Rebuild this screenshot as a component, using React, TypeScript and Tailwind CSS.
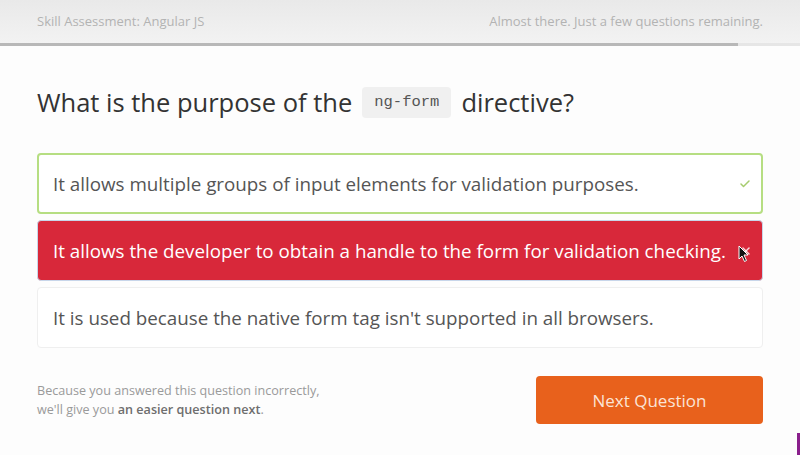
import { Check, X } from "lucide-react"

const options = [
  { text: "It allows multiple groups of input elements for validation purposes.", state: "correct" },
  { text: "It allows the developer to obtain a handle to the form for validation checking.", state: "wrong" },
  { text: "It is used because the native form tag isn't supported in all browsers.", state: "idle" },
]

export default function App() {
  return (
    <div className="relative h-[455px] w-[800px] overflow-hidden bg-[#fdfdfd] font-['Open_Sans',sans-serif]">
      <header className="h-[46px] bg-gradient-to-b from-[#e9e9e9] to-[#f3f3f3]">
        <div className="flex h-[43px] items-center justify-between px-[37px] text-[13px] text-[#b3b3b3]">
          <span>Skill Assessment: Angular JS</span>
          <span>Almost there. Just a few questions remaining.</span>
        </div>
        <div className="flex h-[3px] bg-[#e6e6e6]">
          <div className="w-[738px] bg-[#b8b8b8]" />
        </div>
      </header>

      <main className="px-[37px]">
        <h1 className="mt-[37px] flex items-center text-[25.5px] text-[#333]">
          What is the purpose of the
          <code className="mx-[10px] rounded-sm bg-[#f0f0f0] px-[12px] py-[4px] font-['Liberation_Mono',monospace] text-[15.5px] text-[#555]">
            ng-form
          </code>
          directive?
        </h1>

        <div className="mt-[32px] flex flex-col gap-[6px]">
          {options.map((o) => (
            <div
              key={o.text}
              className={
                o.state === "correct"
                  ? "flex h-[61px] items-center justify-between rounded border-2 border-[#b6de82] bg-white pl-[14px] pr-[10px] text-[18.8px] text-[#555]"
                  : o.state === "wrong"
                    ? "relative flex h-[61px] items-center justify-between rounded border border-[#c8d6ea] bg-[#d8283a] pl-[15px] pr-[10px] text-[18.8px] text-white"
                    : "flex h-[61px] items-center justify-between rounded border border-[#efefef] bg-white pl-[15px] pr-[10px] text-[18.8px] text-[#555]"
              }
            >
              <span className="whitespace-nowrap">{o.text}</span>
              {o.state === "correct" && <Check className="h-3 w-3 shrink-0 text-[#a6cc6e]" strokeWidth={3} />}
              {o.state === "wrong" && <X className="h-3 w-3 shrink-0 text-white/80" strokeWidth={3} />}
              {o.state === "wrong" && (
                <svg className="absolute right-[12px] top-[24px]" width="12" height="18" viewBox="0 0 12 18">
                  <path d="M1 1 L1 14 L4 11 L6.5 16.5 L8.5 15.5 L6 10 L10 10 Z" fill="#111" stroke="#fff" strokeWidth="1" />
                </svg>
              )}
            </div>
          ))}
        </div>

        <div className="mt-[28px] flex items-center justify-between">
          <p className="text-[12.6px] leading-[19px] text-[#9a9a9a]">
            Because you answered this question incorrectly,
            <br />
            we'll give you <span className="font-semibold text-[#6e6e6e]">an easier question next</span>.
          </p>
          <button className="h-[48px] w-[227px] rounded bg-[#e8611c] text-[17px] text-[#fbe4d6]">
            Next Question
          </button>
        </div>
      </main>

      <div className="absolute bottom-0 right-0 h-[22px] w-[3px] bg-[#8a1f8c]" />
    </div>
  )
}
